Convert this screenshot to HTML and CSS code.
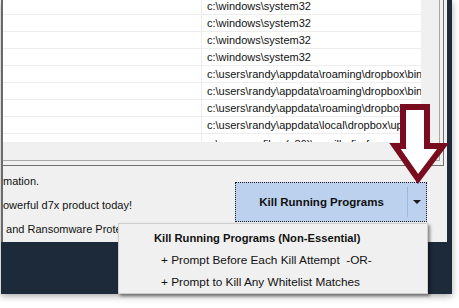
FILE: index.html
```html
<!doctype html>
<html>
    <head>
        <meta name="viewport" content="width=device-width, initial-scale=1.0">
        <title>d7x - Kill Running Programs</title>
        <link rel="stylesheet" href="styles.css">
    </head>
    <body>
        <div class="shot">
            <div class="window">
                <div class="pane-outer">
                    <div class="pane-inner">
                        <div class="list">
                            <div class="row"><div class="col-name"></div><div class="col-path">c:\windows\system32</div></div>
                            <div class="row"><div class="col-name"></div><div class="col-path">c:\windows\system32</div></div>
                            <div class="row"><div class="col-name"></div><div class="col-path">c:\windows\system32</div></div>
                            <div class="row"><div class="col-name"></div><div class="col-path">c:\windows\system32</div></div>
                            <div class="row"><div class="col-name"></div><div class="col-path">c:\users\randy\appdata\roaming\dropbox\bin</div></div>
                            <div class="row"><div class="col-name"></div><div class="col-path">c:\users\randy\appdata\roaming\dropbox\bin</div></div>
                            <div class="row"><div class="col-name"></div><div class="col-path">c:\users\randy\appdata\roaming\dropbox\bin</div></div>
                            <div class="row"><div class="col-name"></div><div class="col-path">c:\users\randy\appdata\local\dropbox\update</div></div>
                            <div class="row"><div class="col-name"></div><div class="col-path">c:\program files (x86)\mozilla firefox</div></div>
                        </div>
                    </div>
                </div>

                <div class="status">
                    <div class="messages">
                        <div class="msg">mation.</div>
                        <div class="msg">owerful d7x product today!</div>
                        <div class="msg">&nbsp;and Ransomware Protection</div>
                    </div>
                    <div class="split-btn">
                        <div class="split-main">Kill Running Programs</div>
                        <div class="split-drop"><span class="caret"></span></div>
                    </div>
                </div>
            </div>

            <svg class="callout" width="460" height="294" viewBox="0 0 460 294">
                <polygon points="403,107 427,107 427,146 443,146 418,179 395,146 403,146"
                    fill="#fff" stroke="#7a0c1f" stroke-width="6" stroke-linejoin="miter" />
            </svg>

            <div class="menu">
                <div class="menu-item menu-head">Kill Running Programs (Non-Essential)</div>
                <div class="menu-item">+ Prompt Before Each Kill Attempt&nbsp; -OR-</div>
                <div class="menu-item">+ Prompt to Kill Any Whitelist Matches</div>
            </div>
        </div>
    </body>
</html>
```

FILE: styles.css
```css
body {
    margin: 0;
    padding: 0;
    width: 459px;
    height: 308px;
    overflow: hidden;
    background-color: #fff;
    font-family: "Liberation Sans", Arial, sans-serif;
    font-size: 11px;
    color: #111;
}

.shot {
    position: relative;
    width: 451px;
    height: 294px;
    margin-left: 1px;
    background-color: #1c2a39;
    box-shadow: 0 2px 7px rgba(0, 0, 0, 0.35);
}

.window {
    width: 446px;
    height: 242px;
    box-sizing: border-box;
    background-color: #f0f0f0;
    border-left: 2px solid #6a6a6a;
}

.pane-outer {
    width: 441px;
    height: 166px;
    box-sizing: border-box;
    border-right: 1px solid #6f6f6f;
    border-bottom: 1px solid #6f6f6f;
}

.pane-inner {
    width: 437px;
    height: 161px;
    box-sizing: border-box;
    border-right: 1px solid #a8a8a8;
    border-bottom: 1px solid #a8a8a8;
}

.list {
    width: 418px;
    height: 142px;
    background-color: #fff;
    overflow: hidden;
}

.row {
    display: flex;
    height: 17px;
    box-sizing: border-box;
    border-bottom: 1px solid #ededed;
}

.row:first-child {
    margin-top: -2px;
}

.col-name {
    width: 198px;
    border-right: 1px solid #ededed;
}

.col-path {
    flex: 1;
    padding-left: 5px;
    line-height: 16px;
    white-space: nowrap;
    overflow: hidden;
}

.row:last-child .col-path {
    line-height: 20px;
}

.status {
    display: flex;
    height: 76px;
}

.messages {
    flex: 1;
    overflow: hidden;
    padding-top: 3px;
    font-size: 11px;
}

.msg {
    height: 24px;
    line-height: 24px;
    white-space: nowrap;
}

.split-btn {
    display: flex;
    width: 192px;
    height: 40px;
    margin-top: 16px;
    margin-right: 20px;
    box-sizing: border-box;
    border: 1px dotted #1e1e1e;
    background-color: #bcd1ee;
}

.split-main {
    flex: 1;
    display: flex;
    align-items: center;
    justify-content: center;
    font-weight: bold;
    font-size: 11.5px;
    color: #111;
}

.split-drop {
    width: 18px;
    margin: 4px 0;
    border-left: 1px solid #9db6dc;
    display: flex;
    align-items: center;
    justify-content: center;
}

.caret {
    width: 0;
    height: 0;
    border-left: 4px solid transparent;
    border-right: 4px solid transparent;
    border-top: 4px solid #1a1a1a;
}

.callout {
    position: absolute;
    left: -1px;
    top: 0;
}

.menu {
    position: absolute;
    left: 117px;
    top: 223px;
    width: 310px;
    height: 71px;
    box-sizing: border-box;
    padding-top: 3px;
    background-color: #f0f0f0;
    border: 1px solid #cfcfcf;
    box-shadow: 2px 2px 3px rgba(0, 0, 0, 0.45);
    font-size: 11.8px;
}

.menu-item {
    height: 22px;
    line-height: 22px;
    padding-left: 42px;
    white-space: nowrap;
    color: #111;
}

.menu-head {
    padding-left: 35px;
    font-weight: bold;
    font-size: 11.2px;
}
```
